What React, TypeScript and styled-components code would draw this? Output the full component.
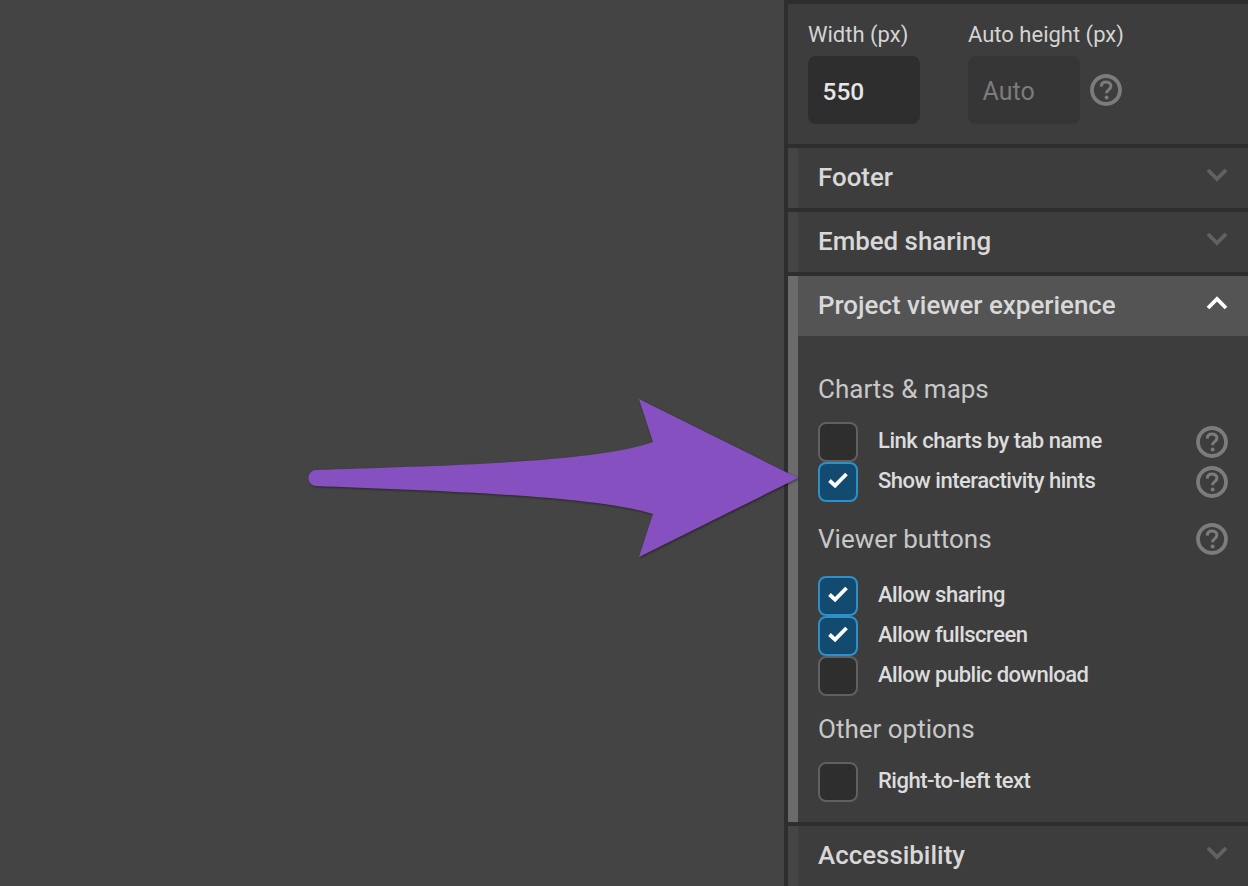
import React, {PropsWithChildren} from "react";
import styled, {createGlobalStyle} from "styled-components";

const GlobalStyle = createGlobalStyle`
  html, body {
    margin: 0;
    padding: 0;
    height: 100%;
    overflow: hidden;
    background: #444444;
    font-family: Roboto, "Liberation Sans", sans-serif;
  }
`;

function HelpIcon() {
	return (
		<HelpSvg viewBox="0 0 32 32" aria-hidden="true">
			<circle cx="16" cy="16" r="14" fill="none" stroke="currentColor" strokeWidth="3.8" />
			<path d="M11.2 12.6c.2-2.8 2.2-4.5 4.9-4.5 2.8 0 4.8 1.7 4.8 4 0 1.8-1 2.8-2.4 3.8-1.4 1-1.9 1.7-1.9 3.3" fill="none" stroke="currentColor" strokeWidth="3" />
			<circle cx="16.6" cy="23.4" r="2" fill="currentColor" />
		</HelpSvg>
	);
}

function Chevron(props: {open?: boolean}) {
	return (
		<ChevronSvg viewBox="0 0 22 14" aria-hidden="true">
			<path d={props.open ? "M2 12L11 3l9 9" : "M2 2l9 9 9-9"} fill="none" stroke="currentColor" strokeWidth="3.8" />
		</ChevronSvg>
	);
}

type SectionProps = PropsWithChildren<{title: string; open?: boolean}>;

function Section(props: SectionProps) {
	const {title, open, children} = props;

	return (
		<SectionBox $open={open}>
			<SectionHead $open={open}>
				<SectionTitle>{title}</SectionTitle>
				<Chevron open={open} />
			</SectionHead>
			{children}
		</SectionBox>
	);
}

function CheckRow(props: {label: string; checked?: boolean; help?: boolean}) {
	const {label, checked, help} = props;

	return (
		<Row>
			<Box $checked={checked}>
				{checked && (
					<CheckSvg viewBox="0 0 22 18" aria-hidden="true">
						<path d="M2.5 9.5l5.6 5.2L19.5 3" fill="none" stroke="#fff" strokeWidth="3.8" />
					</CheckSvg>
				)}
			</Box>
			<RowLabel>{label}</RowLabel>
			{help && <HelpIcon />}
		</Row>
	);
}

export default function App() {
	return (
		<Page>
			<GlobalStyle />
			<Canvas />
			<Arrow viewBox="0 0 500 170" aria-hidden="true">
				<path
					d="M8 71C108 67 285 65 345 43L331 0L490 79L331 158L345 115C285 96 108 91 8 87C-2 86-2 72 8 71Z"
					fill="#8750c0"
				/>
			</Arrow>
			<Sidebar>
				<SizePanel>
					<Field>
						<FieldLabel>Width (px)</FieldLabel>
						<Input>550</Input>
					</Field>
					<Field>
						<FieldLabel>Auto height (px)</FieldLabel>
						<InputRow>
							<Input $disabled>Auto</Input>
							<HelpIcon />
						</InputRow>
					</Field>
				</SizePanel>
				<Section title="Footer" />
				<Section title="Embed sharing" />
				<Section title="Project viewer experience" open>
					<SectionBody>
						<GroupHead>
							<GroupTitle>Charts &amp; maps</GroupTitle>
						</GroupHead>
						<Rows $top={13} $bottom={17}>
							<CheckRow label="Link charts by tab name" help />
							<CheckRow label="Show interactivity hints" checked help />
						</Rows>
						<GroupHead>
							<GroupTitle>Viewer buttons</GroupTitle>
							<HelpIcon />
						</GroupHead>
						<Rows $top={17} $bottom={13}>
							<CheckRow label="Allow sharing" checked />
							<CheckRow label="Allow fullscreen" checked />
							<CheckRow label="Allow public download" />
						</Rows>
						<GroupHead>
							<GroupTitle>Other options</GroupTitle>
						</GroupHead>
						<Rows $top={13} $bottom={0}>
							<CheckRow label="Right-to-left text" />
						</Rows>
					</SectionBody>
				</Section>
				<Section title="Accessibility" />
			</Sidebar>
		</Page>
	);
}

const Page = styled.div`
  position: relative;
  display: flex;
  width: 1248px;
  height: 886px;
  overflow: hidden;
  background: #444444;
`;

const Canvas = styled.div`
  flex: 1;
`;

const Arrow = styled.svg`
  position: absolute;
  left: 308px;
  top: 399px;
  width: 500px;
  height: 170px;
  overflow: visible;
  filter: drop-shadow(1px 1.5px 1px rgba(0, 0, 0, 0.45));
  z-index: 2;
`;

const Sidebar = styled.div`
  display: flex;
  flex-direction: column;
  gap: 4px;
  width: 460px;
  flex: none;
  padding: 4px 0 0 4px;
  box-sizing: content-box;
  background: #2e2e2e;
`;

const SizePanel = styled.div`
  display: flex;
  gap: 48px;
  height: 140px;
  padding: 16px 20px 0;
  box-sizing: border-box;
  flex: none;
  background: #3d3d3d;
`;

const Field = styled.div`
  display: flex;
  flex-direction: column;
`;

const FieldLabel = styled.div`
  height: 36px;
  font-size: 22px;
  line-height: 30px;
  color: #d4d4d4;
`;

const InputRow = styled.div`
  display: flex;
  align-items: center;
  gap: 10px;
  color: #7c7c7c;
`;

const Input = styled.div<{$disabled?: boolean}>`
  width: 112px;
  height: 68px;
  padding-left: 14.5px;
  box-sizing: border-box;
  border-radius: 8px;
  font-size: ${(p) => (p.$disabled ? "25px" : "24.5px")};
  font-weight: ${(p) => (p.$disabled ? 400 : 500)};
  line-height: 72px;
  color: ${(p) => (p.$disabled ? "#7c7c7c" : "#e6e6e6")};
  background: ${(p) => (p.$disabled ? "#363636" : "#2e2e2e")};
`;

const SectionBox = styled.section<{$open?: boolean}>`
  flex: none;
  border-left: 10px solid ${(p) => (p.$open ? "#6b6b6b" : "#454545")};
  background: #3d3d3d;
`;

const SectionHead = styled.div<{$open?: boolean}>`
  display: flex;
  align-items: center;
  justify-content: space-between;
  height: 60px;
  padding: 0 20px;
  color: ${(p) => (p.$open ? "#fff" : "#626262")};
  background: ${(p) => (p.$open ? "#545454" : "transparent")};
`;

const SectionTitle = styled.h3`
  margin: 0 0 2px;
  font-size: 25.9px;
  font-weight: 500;
  line-height: 58px;
  color: #d8d8d8;
`;

const ChevronSvg = styled.svg`
  width: 22px;
  height: 14px;
  margin-top: -6px;
`;

const SectionBody = styled.div`
  height: 486px;
  padding: 33px 20px 0;
  box-sizing: border-box;
`;

const GroupHead = styled.div`
  display: flex;
  align-items: center;
  justify-content: space-between;
  height: 40px;
  color: #7c7c7c;
`;

const GroupTitle = styled.div`
  font-size: 26px;
  line-height: 40px;
  color: #c8c8c8;
`;

const Rows = styled.div<{$top: number; $bottom: number}>`
  display: flex;
  flex-direction: column;
  margin-top: ${(p) => p.$top}px;
  margin-bottom: ${(p) => p.$bottom}px;
`;

const Row = styled.div`
  display: flex;
  align-items: center;
  height: 40px;
  color: #7c7c7c;
`;

const Box = styled.div<{$checked?: boolean}>`
  display: flex;
  align-items: center;
  justify-content: center;
  flex: none;
  width: 40px;
  height: 40px;
  box-sizing: border-box;
  border-radius: 8px;
  border: 2px solid ${(p) => (p.$checked ? "#2f8fc8" : "#606060")};
  background: ${(p) => (p.$checked ? "#134b70" : "#2e2e2e")};
`;

const CheckSvg = styled.svg`
  width: 22px;
  height: 18px;
  margin-top: -4px;
`;

const RowLabel = styled.div`
  flex: 1;
  margin: 0 0 2px 20px;
  font-size: 22px;
  font-weight: 500;
  letter-spacing: -0.5px;
  line-height: 36px;
  color: #dcdcdc;
`;

const HelpSvg = styled.svg`
  flex: none;
  width: 32px;
  height: 32px;
`;
